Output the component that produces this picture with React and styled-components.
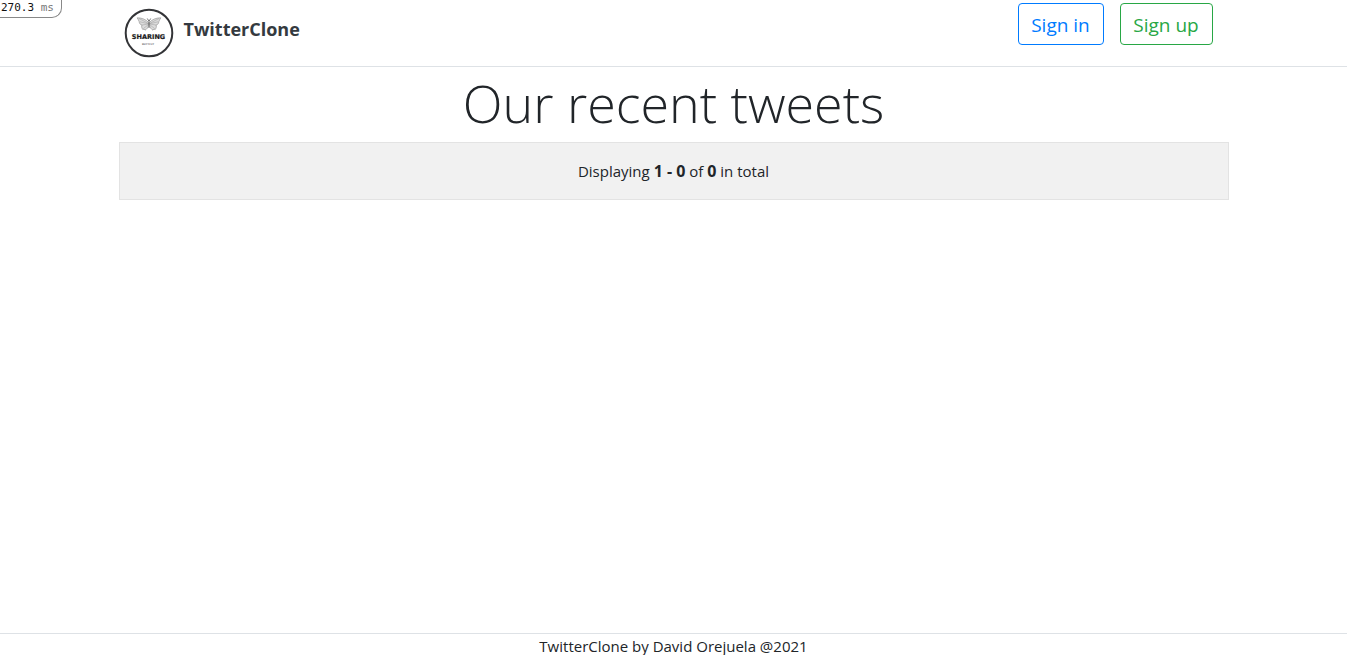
import React from "react";
import styled, { createGlobalStyle } from "styled-components";

const GlobalStyle = createGlobalStyle`
  *, *::before, *::after { box-sizing: border-box; }
  body {
    margin: 0;
    background: #fff;
    color: #212529;
    font-family: "Open Sans", "Noto Sans", sans-serif;
    font-size: 15px;
    line-height: 24px;
  }
`;

const Page = styled.div`
  min-height: 100vh;
  display: flex;
  flex-direction: column;
`;

const Container = styled.div`
  width: 100%;
  max-width: 1140px;
  margin: 0 auto;
  padding: 0 15px;
`;

const Profiler = styled.button`
  position: absolute;
  top: 0;
  left: 0;
  padding: 1px 7px 2px 1px;
  border: solid #888;
  border-width: 0 1px 1px 0;
  border-radius: 0 0 10px 0;
  background: #fff;
  color: #111;
  font-family: "DejaVu Sans Mono", monospace;
  font-size: 11px;
  line-height: 14px;
  white-space: pre;
`;

const Unit = styled.span`
  color: #777;
`;

const Header = styled.header`
  border-bottom: 1px solid #dee2e6;
`;

const Nav = styled.nav`
  display: flex;
  justify-content: space-between;
  align-items: flex-start;
  height: 66px;
`;

const Brand = styled.a`
  display: flex;
  gap: 10px;
  padding: 8px 0 0 5px;
  color: #343a40;
  font-size: 18px;
  font-weight: 700;
  line-height: 42px;
  text-decoration: none;
`;

const LogoImage = styled.svg`
  display: block;
  width: 50px;
  height: 50px;
`;

const Actions = styled.div`
  display: flex;
  gap: 16px;
  padding: 3px 16px 0 0;
`;

const OutlineLink = styled.a`
  width: ${({ $width }) => $width};
  padding: 7px 0 5px;
  border: 1px solid ${({ $color }) => $color};
  border-radius: 4px;
  color: ${({ $color }) => $color};
  font-size: 19px;
  line-height: 28px;
  text-align: center;
  text-decoration: none;
  white-space: nowrap;
`;

const Main = styled.main`
  flex: 1;
`;

const Title = styled.h1`
  margin: 0;
  padding: 3px 0 6px;
  font-size: 52px;
  font-weight: 300;
  line-height: 66px;
  text-align: center;
`;

const Summary = styled.section`
  padding: 16px;
  border: 1px solid #e3e3e3;
  background: #f1f1f1;
  text-align: center;
`;

const Count = styled.b`
  font-size: 16px;
`;

const Footer = styled.footer`
  border-top: 1px solid #dee2e6;
  line-height: 21px;
  padding-top: 2px;
  height: 22px;
  text-align: center;
`;

function Logo() {
  return (
    <LogoImage viewBox="0 0 50 50" aria-hidden="true">
      <circle cx="25" cy="25" r="23.3" fill="#fff" stroke="#333437" strokeWidth="2" />
      <g fill="#dcdcdc" stroke="#8a8a8a" strokeWidth=".6" strokeLinejoin="round">
        <path d="M24.6 14.5C22 11.5 18 9.8 13.2 9.8c.6 1.8 1.8 2.3 2 4 .2 1.7 1 3 2.8 3.2-.8 1.4-.2 3 .8 4.6l1.2-.6 1 1.2c1.8-1 3-2.6 3.6-4.6z" />
        <path d="M25.4 14.5C28 11.5 32 9.8 36.8 9.8c-.6 1.8-1.8 2.3-2 4-.2 1.7-1 3-2.8 3.2.8 1.4.2 3-.8 4.6l-1.2-.6-1 1.2c-1.8-1-3-2.6-3.6-4.6z" />
        <path d="M24.5 15.5 15 10.5M24.5 15.8l-8.5-2M24.5 16 18 17M24.5 16.5l-5 4M25.5 15.5l9.5-5M25.5 15.8l8.5-2M25.5 16l6.5 1M25.5 16.5l5 4" fill="none" strokeWidth=".4" />
        <path d="M25 13v7M24.8 13l-1.5-2.5M25.2 13l1.5-2.5" stroke="#555" fill="none" strokeWidth=".8" />
      </g>
      <text x="24.5" y="31" textAnchor="middle" fontFamily="DejaVu Sans, sans-serif" fontSize="6.5" fontWeight="700" fill="#1b1b1d" stroke="#1b1b1d" strokeWidth=".2">SHARING</text>
      <text x="24" y="37" textAnchor="middle" fontFamily="DejaVu Sans, sans-serif" fontSize="2.5" fontWeight="700" fill="#777">BUTTFLY</text>
    </LogoImage>
  );
}

export default function App() {
  return (
    <Page>
      <GlobalStyle />
      <Header>
        <Container>
          <Nav>
            <Brand href="#home">
              <Logo />
              TwitterClone
            </Brand>
            <Actions>
              <OutlineLink href="#sign-in" $color="#007bff" $width="86px">Sign in</OutlineLink>
              <OutlineLink href="#sign-up" $color="#28a745" $width="93px">Sign up</OutlineLink>
            </Actions>
          </Nav>
        </Container>
      </Header>
      <Main>
        <Container>
          <Title>Our recent tweets</Title>
          <Summary>
            Displaying <Count>1 - 0</Count> of <Count>0</Count> in total
          </Summary>
        </Container>
      </Main>
      <Footer>TwitterClone by David Orejuela @2021</Footer>
      <Profiler type="button">270.3 <Unit>ms</Unit></Profiler>
    </Page>
  );
}
